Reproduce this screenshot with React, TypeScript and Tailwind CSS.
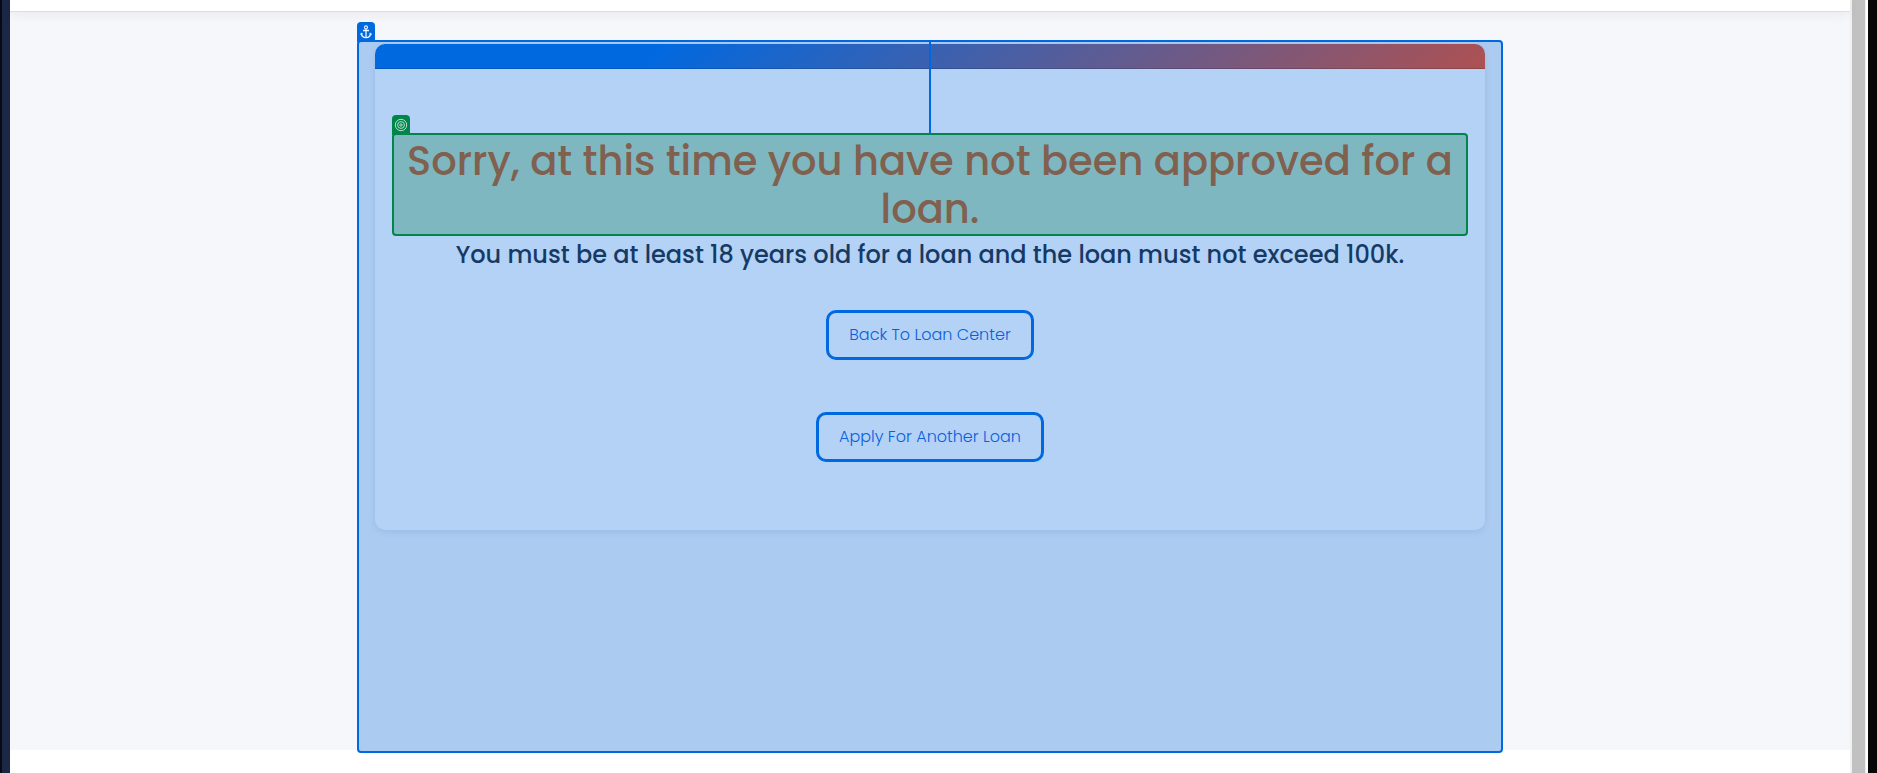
import React from "react";

function AnchorIcon() {
  return (
    <svg viewBox="0 0 12 14" className="h-3.5 w-3" fill="none" stroke="#eef5ff" strokeWidth="1.3" aria-hidden="true">
      <circle cx="6" cy="2.4" r="1.5" strokeWidth="1.1" />
      <path d="M6 4v9M3 5.500h6" />
      <path d="M1.300 8.400c.3 2.700 2.200 4.200 4.700 4.200s4.400-1.500 4.700-4.200" />
      <path d="M.5 10l.8-2 1.700 1M11.500 10l-.8-2-1.700 1" strokeWidth=".7" />
    </svg>
  );
}

function TargetIcon() {
  return (
    <svg viewBox="0 0 14 14" className="size-3.5" fill="none" stroke="#b7dccb" aria-hidden="true">
      <circle cx="7" cy="7" r="5.700" />
      <circle cx="7" cy="7" r="3.400" />
      <circle cx="7" cy="7" r="1.200" />
    </svg>
  );
}

function ActionButton({ children }: { children: React.ReactNode }) {
  return (
    <button
      type="button"
      className="h-[50px] rounded-[10px] border-3 border-[#0069e0] px-5 text-base font-light text-[#0a5fdc]"
    >
      {children}
    </button>
  );
}

export default function App() {
  return (
    <div className="flex min-h-screen bg-white font-['Poppins','Inter',sans-serif]">
      <div className="w-2.5 shrink-0 border-l-2 border-[#050a14] bg-[#1b2745]" />
      <div className="flex min-w-0 grow flex-col">
        <header className="z-10 h-3 border-b border-[#dcdee2] bg-white shadow-[0_3px_12px_rgba(0,0,0,0.06)]" />
        <main className="flex h-[738px] items-start justify-center bg-[#f5f7fb] pt-7">
          <div className="relative w-full max-w-[1146px] rounded border-2 border-[#0069e0] bg-[#accbf1] px-4 pt-0.5 pb-[221px]">
            <div className="absolute -top-5 -left-0.5 flex h-5 w-[18px] items-center justify-center rounded-t bg-[#0069e0]">
              <AnchorIcon />
            </div>
            <div className="absolute top-0 left-1/2 h-[91px] w-0.5 -translate-x-1/2 bg-[#0069e0]" />
            <section className="rounded-[10px] bg-[#b3d2f6] pb-[68px] shadow-[0_2px_6px_rgba(60,110,180,0.16)]">
              <div className="h-[25px] rounded-t-[10px] border-b border-black/15 bg-[linear-gradient(135deg,#0069e0_25%,#ad5152_100%)]" />
              <div className="flex flex-col items-center px-[17px] pt-16 text-center">
                <div className="relative w-full rounded border-2 border-[#00854a] bg-[#7fb7c1] pt-0.5 pb-px">
                  <div className="absolute -top-5 -left-0.5 flex h-5 w-[18px] items-center justify-center rounded-t bg-[#00854a]">
                    <TargetIcon />
                  </div>
                  <h1 className="text-[40px] leading-12 font-medium text-[#80604f]">
                    Sorry, at this time you have not been approved for a loan.
                  </h1>
                </div>
                <p className="mt-1 text-2xl leading-[30px] font-medium text-[#163a66]">
                  You must be at least 18 years old for a loan and the loan must not exceed 100k.
                </p>
                <div className="mt-10 flex flex-col items-center gap-[52px]">
                  <ActionButton>Back To Loan Center</ActionButton>
                  <ActionButton>Apply For Another Loan</ActionButton>
                </div>
              </div>
            </section>
          </div>
        </main>
      </div>
      <div className="w-4 shrink-0 border-r border-l-2 border-[#f0f0f0] bg-[#c1c1c1]" />
      <div className="w-0.5 shrink-0 bg-white" />
      <div className="w-[9px] shrink-0 bg-[#070707]" />
    </div>
  );
}
